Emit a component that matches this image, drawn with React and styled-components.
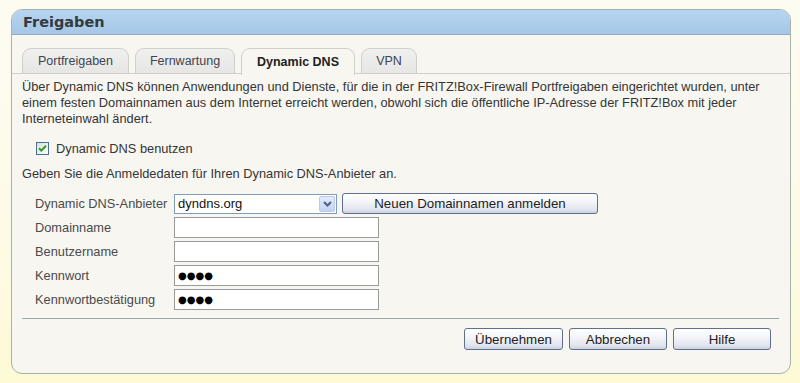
import React from "react";
import styled, { createGlobalStyle } from "styled-components";

const Global = createGlobalStyle`
  html, body { margin: 0; padding: 0; }
  body {
    width: 800px; height: 383px; overflow: hidden;
    background: linear-gradient(180deg, #fdfcf2 0%, #fdfbe6 60%, #fdfad6 100%);
    font-family: "Liberation Sans", Arial, sans-serif;
    font-size: 12.8px; color: #333;
  }
`;

const Page = styled.div`
  padding: 9px 9px 10px 11px;
`;

const Panel = styled.section`
  width: 778px;
  height: 363px;
  border: 1px solid #a9b2aa;
  border-radius: 11px;
  background: #f7f6f1;
  overflow: hidden;
  display: flex;
  flex-direction: column;
`;

const Header = styled.header`
  height: 24px;
  background: linear-gradient(180deg, #b6d5f2 0%, #a6c6e6 100%);
  border-bottom: 1px solid #90abc5;
  display: flex;
  align-items: center;
  padding-left: 11px;
  font-family: "DejaVu Sans", Verdana, sans-serif;
  font-weight: bold;
  font-size: 14.5px;
  color: #353a3f;
`;

const TabStrip = styled.nav`
  margin-top: 12px;
  padding-left: 10px;
  display: flex;
  gap: 6px;
  border-bottom: 1px solid #cfcfcc;
  height: 26px;
`;

const Tab = styled.div`
  width: ${(p) => p.$w}px;
  height: ${(p) => (p.$active ? 27 : 25)}px;
  box-sizing: border-box;
  border: 1px solid #cfcfcc;
  border-bottom: none;
  border-radius: 9px 9px 0 0;
  background: ${(p) =>
    p.$active ? "#f7f6f1" : "linear-gradient(180deg, #f0f0ee 0%, #e6e6e4 100%)"};
  display: flex;
  align-items: center;
  justify-content: center;
  font-size: 12.5px;
  font-weight: ${(p) => (p.$active ? "bold" : "normal")};
  color: ${(p) => (p.$active ? "#222" : "#3d4550")};
  margin-top: 1px;
  position: relative;
  z-index: ${(p) => (p.$active ? 1 : 0)};
`;

const Content = styled.div`
  padding: 5px 11px 0 10px;
  display: flex;
  flex-direction: column;
`;

const Intro = styled.p`
  margin: 0;
  line-height: 16px;
  color: #353535;
`;

const CheckRow = styled.label`
  display: flex;
  align-items: center;
  gap: 7px;
  margin: 13px 0 0 14px;
  height: 16px;
  color: #353535;
`;

const Hint = styled.p`
  margin: 10px 0 0 0;
  line-height: 16px;
  color: #353535;
`;

const Form = styled.div`
  margin: 11px 0 0 13px;
  display: grid;
  grid-template-columns: 139px auto;
  row-gap: 3px;
  align-items: center;
`;

const Label = styled.div`
  color: #4a4a4a;
  line-height: 21px;
`;

const FieldLine = styled.div`
  display: flex;
  align-items: center;
  gap: 5px;
`;

const Select = styled.div`
  width: 163px;
  height: 20px;
  box-sizing: border-box;
  border: 1px solid #7f9db9;
  background: #fff;
  display: flex;
  align-items: center;
  padding-left: 3px;
  font-size: 13px;
  color: #111;
  justify-content: space-between;
`;

const SelectArrow = styled.div`
  width: 16px;
  height: 16px;
  margin-right: 1px;
  box-sizing: border-box;
  border: 1px solid #b9c9e8;
  border-radius: 2px;
  background: linear-gradient(180deg, #e4ecfb 0%, #c2d3f2 100%);
  display: flex;
  align-items: center;
  justify-content: center;
`;

const Input = styled.div`
  width: 205px;
  height: 21px;
  box-sizing: border-box;
  border: 1px solid #9a9a9a;
  background: #fff;
  display: flex;
  align-items: center;
  padding-left: 3px;
  color: #000;
`;

const Button = styled.button`
  width: ${(p) => p.$w}px;
  height: ${(p) => p.$h || 22}px;
  box-sizing: border-box;
  border: 1px solid #5f6f8f;
  border-radius: 3px;
  background: linear-gradient(180deg, #ffffff 0%, #f3f4f8 45%, #dfe3ec 85%, #c9cfdc 100%);
  font-family: "Liberation Sans", Arial, sans-serif;
  font-size: 13.3px;
  color: #222;
  padding: 0;
  display: flex;
  align-items: center;
  justify-content: center;
`;

const Divider = styled.hr`
  margin: 8px 0 0 0;
  border: none;
  border-top: 1px solid #9aa6a4;
  height: 0;
`;

const ButtonBar = styled.div`
  display: flex;
  justify-content: flex-end;
  gap: 6px;
  padding: 9px 8px 0 0;
`;

const Dots = styled.span`
  font-size: 10px;
  font-family: "DejaVu Sans", sans-serif;
`;

function CheckBox() {
  return (
    <svg width="13" height="13" viewBox="0 0 13 13">
      <defs>
        <linearGradient id="cbg" x1="0" y1="0" x2="1" y2="1">
          <stop offset="0" stopColor="#dcdcd6" />
          <stop offset="1" stopColor="#ffffff" />
        </linearGradient>
      </defs>
      <rect x="0.5" y="0.5" width="12" height="12" fill="url(#cbg)" stroke="#4a6f96" />
      <path d="M3 6.3 L5.3 8.6 L10 3.8" fill="none" stroke="#21a121" strokeWidth="2" />
    </svg>
  );
}

function Chevron() {
  return (
    <svg width="9" height="6" viewBox="0 0 9 6">
      <path d="M1 1 L4.5 4.5 L8 1" fill="none" stroke="#4d6185" strokeWidth="2" />
    </svg>
  );
}

export default function App() {
  return (
    <>
      <Global />
      <Page>
        <Panel>
          <Header>Freigaben</Header>
          <TabStrip>
            <Tab $w={107}>Portfreigaben</Tab>
            <Tab $w={100}>Fernwartung</Tab>
            <Tab $w={114} $active>Dynamic DNS</Tab>
            <Tab $w={56}>VPN</Tab>
          </TabStrip>
          <Content>
            <Intro>
              Über Dynamic DNS können Anwendungen und Dienste, für die in der FRITZ!Box-Firewall
              Portfreigaben eingerichtet wurden, unter einem festen Domainnamen aus dem Internet
              erreicht werden, obwohl sich die öffentliche IP-Adresse der FRITZ!Box mit jeder
              Interneteinwahl ändert.
            </Intro>
            <CheckRow>
              <CheckBox />
              Dynamic DNS benutzen
            </CheckRow>
            <Hint>Geben Sie die Anmeldedaten für Ihren Dynamic DNS-Anbieter an.</Hint>
            <Form>
              <Label>Dynamic DNS-Anbieter</Label>
              <FieldLine>
                <Select>
                  dyndns.org
                  <SelectArrow>
                    <Chevron />
                  </SelectArrow>
                </Select>
                <Button $w={256} $h={21}>Neuen Domainnamen anmelden</Button>
              </FieldLine>
              <Label>Domainname</Label>
              <Input />
              <Label>Benutzername</Label>
              <Input />
              <Label>Kennwort</Label>
              <Input>
                <Dots>●●●●</Dots>
              </Input>
              <Label>Kennwortbestätigung</Label>
              <Input>
                <Dots>●●●●</Dots>
              </Input>
            </Form>
            <Divider />
            <ButtonBar>
              <Button $w={99}>Übernehmen</Button>
              <Button $w={98}>Abbrechen</Button>
              <Button $w={98}>Hilfe</Button>
            </ButtonBar>
          </Content>
        </Panel>
      </Page>
    </>
  );
}
